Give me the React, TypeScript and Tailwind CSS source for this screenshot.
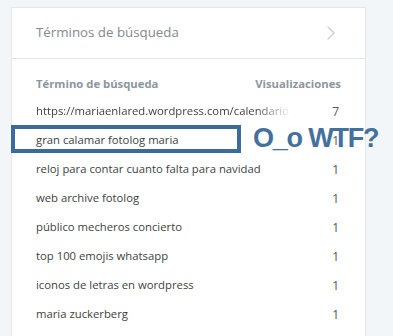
import { ChevronRight } from 'lucide-react';

const ROWS: { term: string; views: number }[] = [
  { term: 'https://mariaenlared.wordpress.com/calendario', views: 7 },
  { term: 'gran calamar fotolog maria', views: 1 },
  { term: 'reloj para contar cuanto falta para navidad', views: 1 },
  { term: 'web archive fotolog', views: 1 },
  { term: 'público mecheros concierto', views: 1 },
  { term: 'top 100 emojis whatsapp', views: 1 },
  { term: 'iconos de letras en wordpress', views: 1 },
  { term: 'maria zuckerberg', views: 1 },
];

export default function App() {
  return (
    <div className="relative h-[336px] overflow-hidden bg-[#f3f6f8] pl-[11px] pt-[7px] font-['Open_Sans','Liberation_Sans',sans-serif]">
      <div className="w-[355px] bg-white border border-[#e3e8ec]">
        {/* header */}
        <div className="h-[51px] flex items-center justify-between pl-[24px] pr-[22px] border-b border-[#dfe4e8]">
          <span className="text-[13.3px] text-[#85898c]">Términos de búsqueda</span>
          <ChevronRight className="w-6 h-6 text-[#c6cdd3]" strokeWidth={1.3} />
        </div>

        <div className="px-[24px] pt-[12px] pb-4">
          <div className="h-[26px] flex items-center justify-between text-[11.3px] font-bold text-[#8d969d]">
            <span>Término de búsqueda</span>
            <span>Visualizaciones</span>
          </div>
          {ROWS.map((r, i) => (
            <div key={i} className="relative h-[29px] flex items-center justify-between text-[11.3px] text-[#3d3f41]">
              <span
                className={
                  i === 0
                    ? 'w-[256px] overflow-hidden whitespace-nowrap [mask-image:linear-gradient(to_right,black_86%,transparent)]'
                    : 'whitespace-nowrap'
                }
              >
                {r.term}
              </span>
              <span className="text-[#55585b] text-[12px] pr-[2px]">{r.views}</span>

              {i === 1 && (
                <>
                  {/* annotation overlay */}
                  <div className="absolute left-[-25px] top-[-1px] w-[230px] h-[28px] border-4 border-[#3d6a9c]" />
                  <div className="absolute left-[217px] top-[-6px] whitespace-nowrap text-[27px] leading-[36px] tracking-[-1.2px] font-bold text-[#44709e] font-['Liberation_Sans',sans-serif]">
                    O_o WTF?
                  </div>
                </>
              )}
            </div>
          ))}
        </div>
      </div>
    </div>
  );
}
